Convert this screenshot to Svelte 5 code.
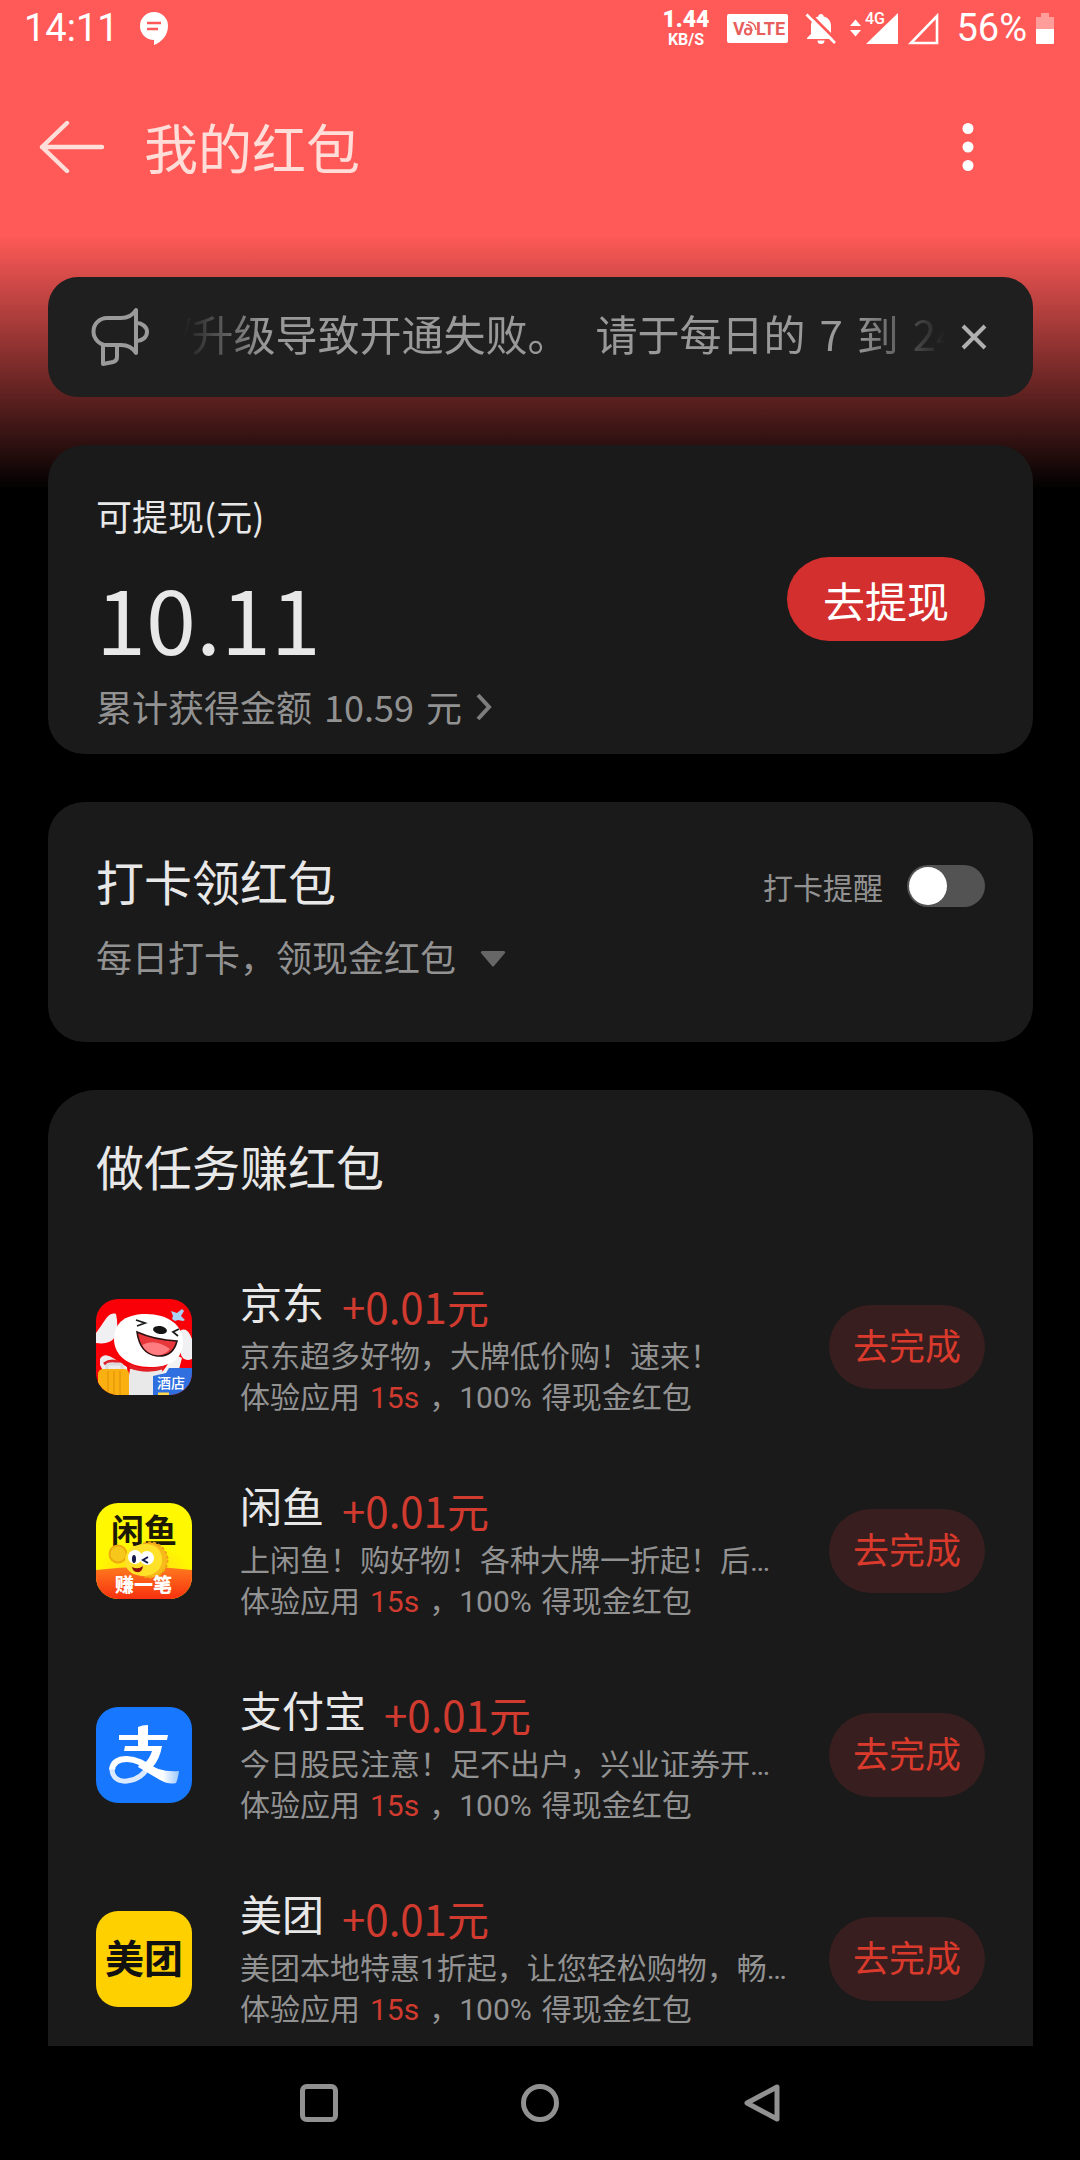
<script>
  let remind = false
  let noticeOpen = true

  const tasks = [
    { id: 'jd', name: '京东', reward: '+0.01元', desc: '京东超多好物，大牌低价购！速来！' },
    { id: 'xianyu', name: '闲鱼', reward: '+0.01元', desc: '上闲鱼！购好物！各种大牌一折起！后…' },
    { id: 'alipay', name: '支付宝', reward: '+0.01元', desc: '今日股民注意！足不出户，兴业证券开…' },
    { id: 'meituan', name: '美团', reward: '+0.01元', desc: '美团本地特惠1折起，让您轻松购物，畅…' }
  ]
</script>

<div class="screen">
  <div class="status">
    <span class="clock">14:11</span>
    <svg class="chat" width="28" height="34" viewBox="0 0 28 34">
      <path d="M14 0a14 14 0 0 1 14 14c0 9-6 16-14 19v-5A14 14 0 0 1 14 0z" fill="#fff"/>
      <path d="M7 11h14M7 17h11" stroke="#ff5a57" stroke-width="2.4"/>
    </svg>
    <div class="speed"><b>1.44</b><small>KB/S</small></div>
    <svg class="volte" width="61" height="29" viewBox="0 0 61 29">
      <rect width="61" height="29" rx="2" fill="#fff"/>
      <text x="6" y="21" class="volte-text">V</text>
      <text x="29" y="21" class="volte-text">LTE</text>
      <circle cx="21" cy="17.500" r="3" fill="none" stroke="#e8605d" stroke-width="2.2"/>
      <path d="M19 11q5-1 6 6M21 8q7 0 8 8" fill="none" stroke="#e8605d" stroke-width="1.6"/>
    </svg>
    <svg class="bell" width="32" height="32" viewBox="0 0 32 32">
      <path d="M16 1c1.600 0 2.700 1 2.700 2.600C23.500 4.800 26 8.500 26 13v8l4 4v1H2v-1l4-4v-8c0-4.500 2.500-8.200 7.300-9.400C13.300 2 14.400 1 16 1zM12.500 27.500h7a3.500 3.500 0 0 1-7 0z" fill="#fff"/>
      <path d="M4 0l28 28" stroke="#ff5a57" stroke-width="3"/>
      <path d="M1.500 1.500L30 30" stroke="#fff" stroke-width="2.600"/>
    </svg>
    <svg class="signal" width="48" height="34" viewBox="0 0 48 34">
      <path d="M0 14l5.500-6.500L11 14zM0 18h11l-5.500 6.500z" fill="#fff"/>
      <path d="M48 1v31H16z" fill="#fff"/>
      <text x="15" y="12" class="net-text">4G</text>
    </svg>
    <svg class="signal-empty" width="32" height="34" viewBox="0 0 32 34">
      <path d="M30 4v27H4z" fill="none" stroke="#fff" stroke-width="2.600"/>
    </svg>
    <span class="percent">56%</span>
    <svg class="battery" width="18" height="32" viewBox="0 0 18 32">
      <path d="M5 0h8v4h5v12H0V4h5z" fill="#ff9d9b"/>
      <path d="M0 16h18v14a1 1 0 0 1-1 1H1a1 1 0 0 1-1-1z" fill="#fff"/>
    </svg>
  </div>

  <header>
    <button class="icon-btn" aria-label="返回">
      <svg width="66" height="56" viewBox="0 0 66 56">
        <path d="M63 28H3M28 4L3 28l25 24" fill="none" stroke="#ffded9" stroke-width="4.400" stroke-linecap="round" stroke-linejoin="round"/>
      </svg>
    </button>
    <h1>我的红包</h1>
    <button class="icon-btn" aria-label="更多">
      <svg width="12" height="50" viewBox="0 0 12 50" fill="#fff">
        <circle cx="6" cy="6.500" r="5.500"/>
        <circle cx="6" cy="25" r="5.500"/>
        <circle cx="6" cy="43.500" r="5.500"/>
      </svg>
    </button>
  </header>

  <main>
    {#if noticeOpen}
      <section class="notice">
        <svg width="60" height="60" viewBox="0 -2 60 60" fill="none" stroke="#9a9a9a" stroke-width="4" stroke-linejoin="round">
          <path d="M16 9h14q10 0 15-8v43q-5-8-15-8H16a13 13 0 0 1 0-27z"/>
          <path d="M46 14c5 0 10 4 10 9s-5 9-10 9"/>
          <path d="M12 36v19l10-2q4-1 4-5V36"/>
        </svg>
        <div class="ticker">
          <span>/升级导致开通失败。</span>
          <p><span>请于每日的</span> <span>7</span> <span>到</span> <span>24</span></p>
        </div>
        <button class="icon-btn" aria-label="关闭" on:click={() => noticeOpen = false}>
          <svg width="28" height="28" viewBox="0 0 28 28">
            <path d="M3 3l22 22M25 3L3 25" stroke="#b0b0b0" stroke-width="4"/>
          </svg>
        </button>
      </section>
    {/if}

    <section class="card balance">
      <div>
        <p class="label">可提现(元)</p>
        <p class="amount">10.11</p>
        <a class="total" href="#total">
          <span>累计获得金额</span> <span>10.59</span> <span>元</span>
          <svg width="16" height="28" viewBox="0 0 16 28">
            <path d="M2 2l11 12L2 26" fill="none" stroke="#7d7d7d" stroke-width="4"/>
          </svg>
        </a>
      </div>
      <button class="withdraw">去提现</button>
    </section>

    <section class="card checkin">
      <div class="row">
        <h2>打卡领红包</h2>
        <label class="remind">
          打卡提醒
          <input type="checkbox" role="switch" bind:checked={remind}>
        </label>
      </div>
      <button class="rule">
        每日打卡，领现金红包
        <svg width="26" height="16" viewBox="0 0 26 16"><path d="M2 0h22q2 1 1 2L14 15q-1 1-2 0L1 2Q0 1 2 0z" fill="#666"/></svg>
      </button>
    </section>

    <section class="card tasks">
      <h2>做任务赚红包</h2>
      <ul>
        {#each tasks as { id, name, reward, desc } (id)}
          <li>
            <svg class="logo" width="96" height="96" viewBox="0 0 96 96">
              {#if id === 'jd'}
                <rect width="96" height="96" fill="#f90008"/>
                <path d="M34 70h32l6 26H30z" fill="#e9e9ea"/>
                <path d="M4 60q4-7 13-1l14 9 2 28H20L4 66z" fill="#ececee"/>
                <path d="M74 62q4-8 12-3l-4 15-22 8z" fill="#f3f3f4"/>
                <path d="M20 15C12 12 8 24 0 34v10q14 2 19-6 4-10 1-23z" fill="#f0f0f2"/>
                <path d="M84 32q7-5 12 8v20q-8 3-11-4z" fill="#f0f0f2"/>
                <path d="M34 65q14 8 34 1v4q-18 6-35-1z" fill="#e02026"/>
                <path d="M18 40c0-18 14-25 32-25 22 0 37 11 37 28 0 18-14 25-33 25-22 0-36-12-36-28z" fill="#fff"/>
                <path d="M40 21l9 3-8 3M83 30l-6 3 5 4" fill="none" stroke="#1b1b1b" stroke-width="1.800"/>
                <ellipse cx="64" cy="31" rx="7" ry="4" fill="#141414" transform="rotate(8 64 31)"/>
                <path d="M41 33q18 8 40 9-4 16-20 15-17-2-20-24z" fill="#e8373b" stroke="#2a1112" stroke-width="1.600"/>
                <path d="M46 46q13-7 28 4-6 7-14 6-9-1-14-10z" fill="#ff7d80"/>
                <path d="M8 65q8-6 18 0" fill="none" stroke="#e02026" stroke-width="3"/>
                <path d="M11 71v-4q0-2 3-2h9q3 0 3 2v4" fill="none" stroke="#d8dadd" stroke-width="3"/>
                <rect x="2" y="70" width="31" height="32" rx="5" fill="#fbb012"/>
                <path d="M12 72v24M18 72v24M24 72v24" stroke="#e79a0a" stroke-width="1.500"/>
                <path d="M57 77l13-3 3-5h23v27H57z" fill="#2f6fe0"/>
                <path d="M62 95h11" stroke="#ffd84a" stroke-width="3"/>
                <text x="61" y="89" class="jd-text">酒店</text>
                <path d="M75 12l6 2 5-4 2 2-3 5 4 4-2 1-5-1-3 1-3-2 1-3z" fill="#a9d2f5"/>
              {:else if id === 'xianyu'}
                <defs>
                  <linearGradient id="xy-red" x1="0" y1="0" x2="0" y2="1">
                    <stop offset="0" stop-color="#ff7a1e"/>
                    <stop offset="1" stop-color="#f7300f"/>
                  </linearGradient>
                  <radialGradient id="xy-glow">
                    <stop offset="0" stop-color="#ffd21a"/>
                    <stop offset="1" stop-color="#fff800"/>
                  </radialGradient>
                </defs>
                <rect width="96" height="96" fill="#fff800"/>
                <ellipse cx="48" cy="66" rx="46" ry="24" fill="url(#xy-glow)"/>
                <path d="M0 67q48-6 96 0v29H0z" fill="url(#xy-red)"/>
                <text x="15" y="40" class="xy-name">闲鱼</text>
                <circle cx="22" cy="51" r="8.500" fill="#f7c81c" stroke="#eda90f" stroke-width="2"/>
                <circle cx="54" cy="57" r="17.500" fill="#f8b91a" stroke="#f0a214" stroke-width="2" stroke-dasharray="3 2"/>
                <path d="M29 58q0-16 20-17 15 0 17 14 1 15-17 18-19 0-20-15z" fill="#ffe12a"/>
                <circle cx="39" cy="54" r="7" fill="#fff"/>
                <circle cx="51" cy="55" r="7" fill="#fff"/>
                <ellipse cx="38" cy="56" rx="2" ry="4" fill="#131a4a"/>
                <path d="M52 54l-5 3 5 3" fill="none" stroke="#131a4a" stroke-width="2"/>
                <path d="M36 64q6 3 11-1-1 7-6 6-4 0-5-5z" fill="#8d0f0b"/>
                <text x="19" y="89" class="xy-tag">赚一笔</text>
              {:else if id === 'alipay'}
                <defs>
                  <linearGradient id="ali-tail" x1="0" y1="0" x2="1" y2="0">
                    <stop offset="0" stop-color="#fff"/>
                    <stop offset="0.600" stop-color="#fff"/>
                    <stop offset="1" stop-color="#9cc8ff"/>
                  </linearGradient>
                </defs>
                <rect width="96" height="96" fill="#1777ff"/>
                <path d="M42 20q4-2 10-2v10h20l-1 5H52v6h14q-2 13-10 22l-8-4q6-6 8-13H28l1-5h13v-6H23v-5h19z" fill="#fff"/>
                <path d="M16 63q1-11 15-11c14 0 24 11 36 17" fill="none" stroke="#fff" stroke-width="6"/>
                <path d="M16 62c0 8 6 13 15 12 11-1 18-8 22-15" fill="none" stroke="#dceaff" stroke-width="5"/>
                <path d="M45 54q20 12 38 10-1 8-3 12-7 2-16-3L42 60z" fill="url(#ali-tail)"/>
              {:else}
                <rect width="96" height="96" fill="#ffd000"/>
                <text x="9" y="62" class="mt-text">美团</text>
              {/if}
            </svg>
            <div class="info">
              <h3>{name}<span class="reward">{reward}</span></h3>
              <p class="desc">{desc}</p>
              <p class="meta"><span>体验应用</span> <em>15s</em> <span>，100%</span> <span>得现金红包</span></p>
            </div>
            <button class="go">去完成</button>
          </li>
        {/each}
      </ul>
    </section>
  </main>

  <nav>
    <button class="icon-btn" aria-label="最近任务">
      <svg width="40" height="40" viewBox="0 0 40 40"><rect x="3.500" y="3.500" width="33" height="33" rx="4" fill="none" stroke="#919191" stroke-width="5"/></svg>
    </button>
    <button class="icon-btn" aria-label="主屏幕">
      <svg width="40" height="40" viewBox="0 0 40 40"><circle cx="20" cy="20" r="16.500" fill="none" stroke="#919191" stroke-width="5"/></svg>
    </button>
    <button class="icon-btn" aria-label="后退">
      <svg width="40" height="40" viewBox="0 0 40 40"><path d="M36 4v32L6 20z" fill="none" stroke="#919191" stroke-width="5" stroke-linejoin="round"/></svg>
    </button>
  </nav>
</div>

<style>
  :global(body) {
    margin: 0;
    background: #000;
  }

  .screen {
    min-height: 100vh;
    display: flex;
    flex-direction: column;
    background: linear-gradient(#ff5a57 235px, #000 490px);
    color: #e8e8e8;
    font-family: "Noto Sans CJK SC", "Noto Sans", sans-serif;
  }

  h1, h2, h3, p, ul {
    margin: 0;
    padding: 0;
    font-weight: 400;
  }

  svg {
    display: block;
    flex: none;
  }

  button {
    border: 0;
    padding: 0;
    background: none;
    color: inherit;
    font: inherit;
    cursor: pointer;
  }

  .status {
    display: flex;
    align-items: center;
    height: 57px;
    padding: 0 26px 0 24px;
    color: #fff;
    font-family: Roboto, sans-serif;
  }

  .clock, .percent {
    font-size: 38px;
    line-height: 57px;
  }

  .chat {
    margin-left: 21px;
  }

  .speed {
    display: flex;
    flex-direction: column;
    align-items: center;
    margin-left: auto;
    font-weight: 700;
  }

  .speed b {
    font-size: 23px;
    line-height: 22px;
  }

  .speed small {
    font-size: 16px;
    line-height: 18px;
  }

  .volte {
    margin-left: 18px;
  }

  .volte-text {
    font: 700 18px Roboto, sans-serif;
    fill: #e8605d;
  }

  .bell {
    margin-left: 17px;
  }

  .signal {
    margin-left: 13px;
    overflow: visible;
  }

  .net-text {
    font: 500 16px Roboto, sans-serif;
    fill: #fff;
    stroke: #ff5a57;
    stroke-width: 3px;
    paint-order: stroke;
  }

  .signal-empty {
    margin-left: 9px;
  }

  .percent {
    margin-left: 17px;
  }

  .battery {
    margin-left: 9px;
  }

  header {
    display: flex;
    align-items: center;
    height: 180px;
    padding: 0 106px 0 39px;
  }

  h1 {
    flex: 1;
    margin-left: 39px;
    font-size: 54px;
    line-height: 72px;
    color: #ffded9;
  }

  main {
    flex: 1;
    display: flex;
    flex-direction: column;
    gap: 48px;
    padding: 40px 47px 0 48px;
  }

  .notice {
    display: flex;
    align-items: center;
    height: 120px;
    padding: 0 45px 0 43px;
    border-radius: 30px;
    background: #1f1f1f;
  }

  .ticker {
    flex: 1;
    min-width: 0;
    display: flex;
    gap: 26px;
    margin: 0 14px 0 24px;
    padding-bottom: 8px;
    overflow: hidden;
    font-size: 42px;
    line-height: 60px;
    color: #999;
    white-space: nowrap;
    mask-image: linear-gradient(90deg, transparent 8px, #000 90px, #000 calc(100% - 90px), transparent);
  }

  .ticker p {
    display: flex;
    gap: 14px;
  }

  .card {
    padding: 46px 48px;
    border-radius: 36px;
    background: #1a1a1a;
  }

  .balance {
    display: flex;
    align-items: center;
    justify-content: space-between;
    padding-bottom: 24px;
  }

  .label {
    font-size: 36px;
    line-height: 48px;
  }

  .amount {
    margin: 29px 0 18px;
    font-size: 90px;
    line-height: 96px;
  }

  .total {
    display: flex;
    align-items: center;
    gap: 12px;
    font-size: 36px;
    line-height: 48px;
    color: #929292;
    text-decoration: none;
  }

  .total svg {
    margin: 2px 0 0 2px;
  }

  .withdraw {
    height: 84px;
    padding: 2px 36px 0;
    margin-bottom: 23px;
    border-radius: 42px;
    background: #d32f2f;
    color: #fff;
    font-size: 42px;
    line-height: 60px;
  }

  .row {
    display: flex;
    align-items: center;
    justify-content: space-between;
  }

  h2 {
    font-size: 48px;
    line-height: 64px;
  }

  .remind {
    display: flex;
    align-items: center;
    gap: 24px;
    margin-top: 12px;
    font-size: 30px;
    line-height: 40px;
    color: #929292;
  }

  .remind input {
    appearance: none;
    display: flex;
    width: 78px;
    height: 42px;
    margin: 0;
    padding: 2px;
    box-sizing: border-box;
    border-radius: 21px;
    background: #535353;
  }

  .remind input::before {
    content: "";
    width: 38px;
    height: 38px;
    border-radius: 50%;
    background: #fff;
  }

  .remind input:checked {
    justify-content: flex-end;
    background: #d32f2f;
  }

  .checkin {
    padding-bottom: 62px;
  }

  .rule {
    display: flex;
    align-items: center;
    gap: 24px;
    margin-top: 20px;
    font-size: 36px;
    line-height: 48px;
    color: #929292;
  }

  .rule svg {
    margin-top: 6px;
  }

  .tasks {
    flex: 1;
    padding: 43px 48px 0;
    border-radius: 48px 48px 0 0;
  }

  ul {
    display: flex;
    flex-direction: column;
    gap: 56px;
    margin-top: 76px;
    list-style: none;
  }

  li {
    display: flex;
    align-items: center;
  }

  .logo {
    border-radius: 22px;
  }

  .jd-text {
    font: 500 14px "Noto Sans CJK SC", sans-serif;
    fill: #fff;
  }

  .xy-name {
    font: 700 33px "Noto Sans CJK SC", sans-serif;
    fill: #1c1a05;
  }

  .xy-tag {
    font: 900 19px "Noto Sans CJK SC", sans-serif;
    fill: #fff;
  }

  .mt-text {
    font: 700 39px "Noto Sans CJK SC", sans-serif;
    fill: #111;
  }

  .info {
    flex: 1;
    min-width: 0;
    margin-left: 48px;
    padding-bottom: 3px;
  }

  h3 {
    display: flex;
    gap: 18px;
    margin-bottom: 7px;
    font-size: 42px;
    line-height: 56px;
  }

  .reward {
    padding-top: 5px;
    margin-bottom: -5px;
    color: #d03a2f;
  }

  .desc, .meta {
    font-family: Roboto, "Noto Sans CJK SC", sans-serif;
    font-size: 30px;
    line-height: 41px;
    color: #929292;
    white-space: nowrap;
  }

  .desc {
    overflow: hidden;
    text-overflow: ellipsis;
  }

  .meta {
    display: flex;
    gap: 10px;
  }

  .meta em {
    font-style: normal;
    color: #d03a2f;
  }

  .go {
    height: 84px;
    padding: 0 24px 6px;
    border-radius: 42px;
    background: #381e1e;
    color: #da3a2c;
    font-size: 36px;
    line-height: 48px;
  }

  nav {
    display: flex;
    align-items: center;
    justify-content: center;
    gap: 181px;
    height: 114px;
    background: #000;
  }
</style>
